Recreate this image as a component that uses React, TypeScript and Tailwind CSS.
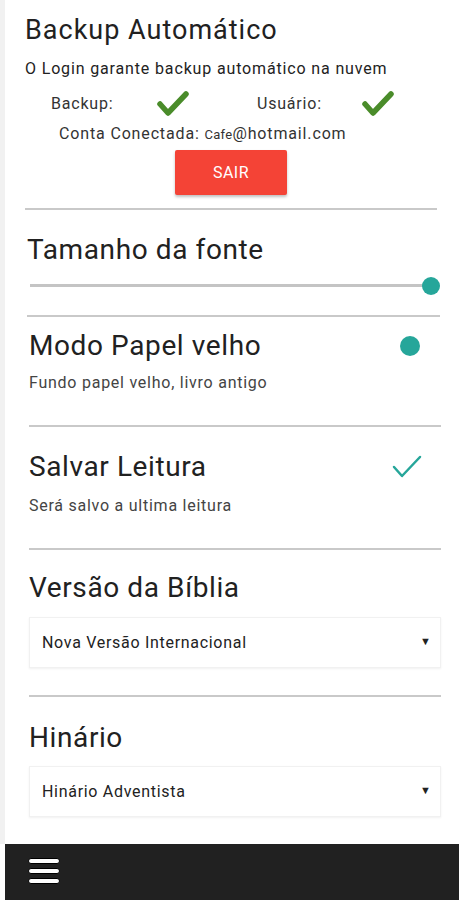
import React from "react";

function GreenCheck() {
  return (
    <svg width="32" height="26" viewBox="0 0 32 26" className="block">
      <polyline points="3,13 11,22 29,3" fill="none" stroke="#4a8c2a" strokeWidth="5.5" strokeLinecap="round" strokeLinejoin="round" />
    </svg>
  );
}

function TealCheck() {
  return (
    <svg width="30" height="24" viewBox="0 0 30 24" className="block">
      <polyline points="2,12 10,21 28,2" fill="none" stroke="#26a69a" strokeWidth="2.5" strokeLinecap="round" strokeLinejoin="round" />
    </svg>
  );
}

function Divider({ cls }: { cls: string }) {
  return <div className={"h-[2px] bg-[#c9c9c9] " + cls} />;
}

function Select({ label }: { label: string }) {
  return (
    <div className="h-[51px] bg-white border border-[#f1f1f1] shadow-[0_1px_2px_rgba(0,0,0,0.06)] flex items-center justify-between pl-[12px] pr-[9px]">
      <span className="text-[16px] leading-[20px] tracking-[0.7px] text-[#222]">{label}</span>
      <span className="text-[11px] text-[#222]">▼</span>
    </div>
  );
}

export default function App() {
  return (
    <div className="w-[459px] h-[900px] flex flex-col bg-white overflow-hidden" style={{ fontFamily: "Roboto, 'Noto Sans', sans-serif" }}>
      <div className="flex-1 flex border-l-[5px] border-[#f1f1f1]">
        <div className="flex-1 pl-[20px] pr-[22px] text-[#212121]">
          <h1 className="mt-[14px] text-[27px] leading-[32px] font-normal tracking-[1px]">Backup Automático</h1>
          <p className="mt-[13px] text-[16px] leading-[20px] tracking-[0.85px] text-[#222]">O Login garante backup automático na nuvem</p>
          <div className="mt-[11px] h-[28px] flex items-center ml-[26px] text-[16px] tracking-[0.8px] text-[#333]">
            <span className="w-[106px]">Backup:</span>
            <span className="w-[100px]"><GreenCheck /></span>
            <span className="w-[105px]">Usuário:</span>
            <GreenCheck />
          </div>
          <div className="mt-[6px] ml-[34px] text-[16px] leading-[20px] tracking-[0.85px] text-[#333]">
            Conta Conectada: <span className="text-[13px] tracking-[0.3px]">Cafe</span>@hotmail.com
          </div>
          <div className="mt-[5px] flex justify-center">
            <button className="w-[112px] h-[45px] bg-[#f44336] text-white text-[16px] tracking-[0.5px] rounded-[2px] shadow-[0_2px_3px_rgba(0,0,0,0.25)]">SAIR</button>
          </div>
          <Divider cls="mt-[13px]" />

          <div className="pl-[2px]">
            <h2 className="mt-[24px] text-[28px] leading-[32px] tracking-[0.6px]">Tamanho da fonte</h2>
            <div className="mt-[10px] h-[20px] relative ml-[3px] mr-[-3px]">
              <div className="absolute left-0 right-[10px] top-[8px] h-[3px] bg-[#c4c4c4]" />
              <div className="absolute right-0 top-[1px] w-[18px] h-[18px] rounded-full bg-[#26a69a]" />
            </div>
            <Divider cls="mt-[19px] mr-[-3px]" />
          </div>

          <div className="pl-[4px] mr-[-4px]">
            <div className="mt-[13px] flex items-center justify-between">
              <h2 className="text-[28px] leading-[32px] tracking-[0.6px]">Modo Papel velho</h2>
              <div className="w-[20px] h-[20px] rounded-full bg-[#26a69a] mr-[21px]" />
            </div>
            <p className="mt-[11px] text-[16px] leading-[20px] tracking-[0.75px] text-[#444]">Fundo papel velho, livro antigo</p>
            <Divider cls="mt-[32px]" />

            <div className="mt-[24px] flex items-center justify-between">
              <h2 className="text-[28px] leading-[32px] tracking-[0.6px]">Salvar Leitura</h2>
              <div className="mr-[19px]"><TealCheck /></div>
            </div>
            <p className="mt-[13px] text-[16px] leading-[20px] tracking-[0.75px] text-[#444]">Será salvo a ultima leitura</p>
            <Divider cls="mt-[32px]" />

            <h2 className="mt-[22px] text-[28px] leading-[32px] tracking-[0.6px]">Versão da Bíblia</h2>
            <div className="mt-[13px]"><Select label="Nova Versão Internacional" /></div>
            <Divider cls="mt-[27px]" />

            <h2 className="mt-[25px] text-[28px] leading-[32px] tracking-[0.6px]">Hinário</h2>
            <div className="mt-[12px]"><Select label="Hinário Adventista" /></div>
          </div>
        </div>
      </div>
      <div className="h-[56px] ml-[5px] bg-[#212121] flex items-center pl-[23px]">
        <div className="flex flex-col gap-[4px] mt-[-2px]">
          <div className="w-[32px] h-[6px] rounded-full bg-white border border-black" />
          <div className="w-[32px] h-[6px] rounded-full bg-white border border-black" />
          <div className="w-[32px] h-[6px] rounded-full bg-white border border-black" />
        </div>
      </div>
    </div>
  );
}
